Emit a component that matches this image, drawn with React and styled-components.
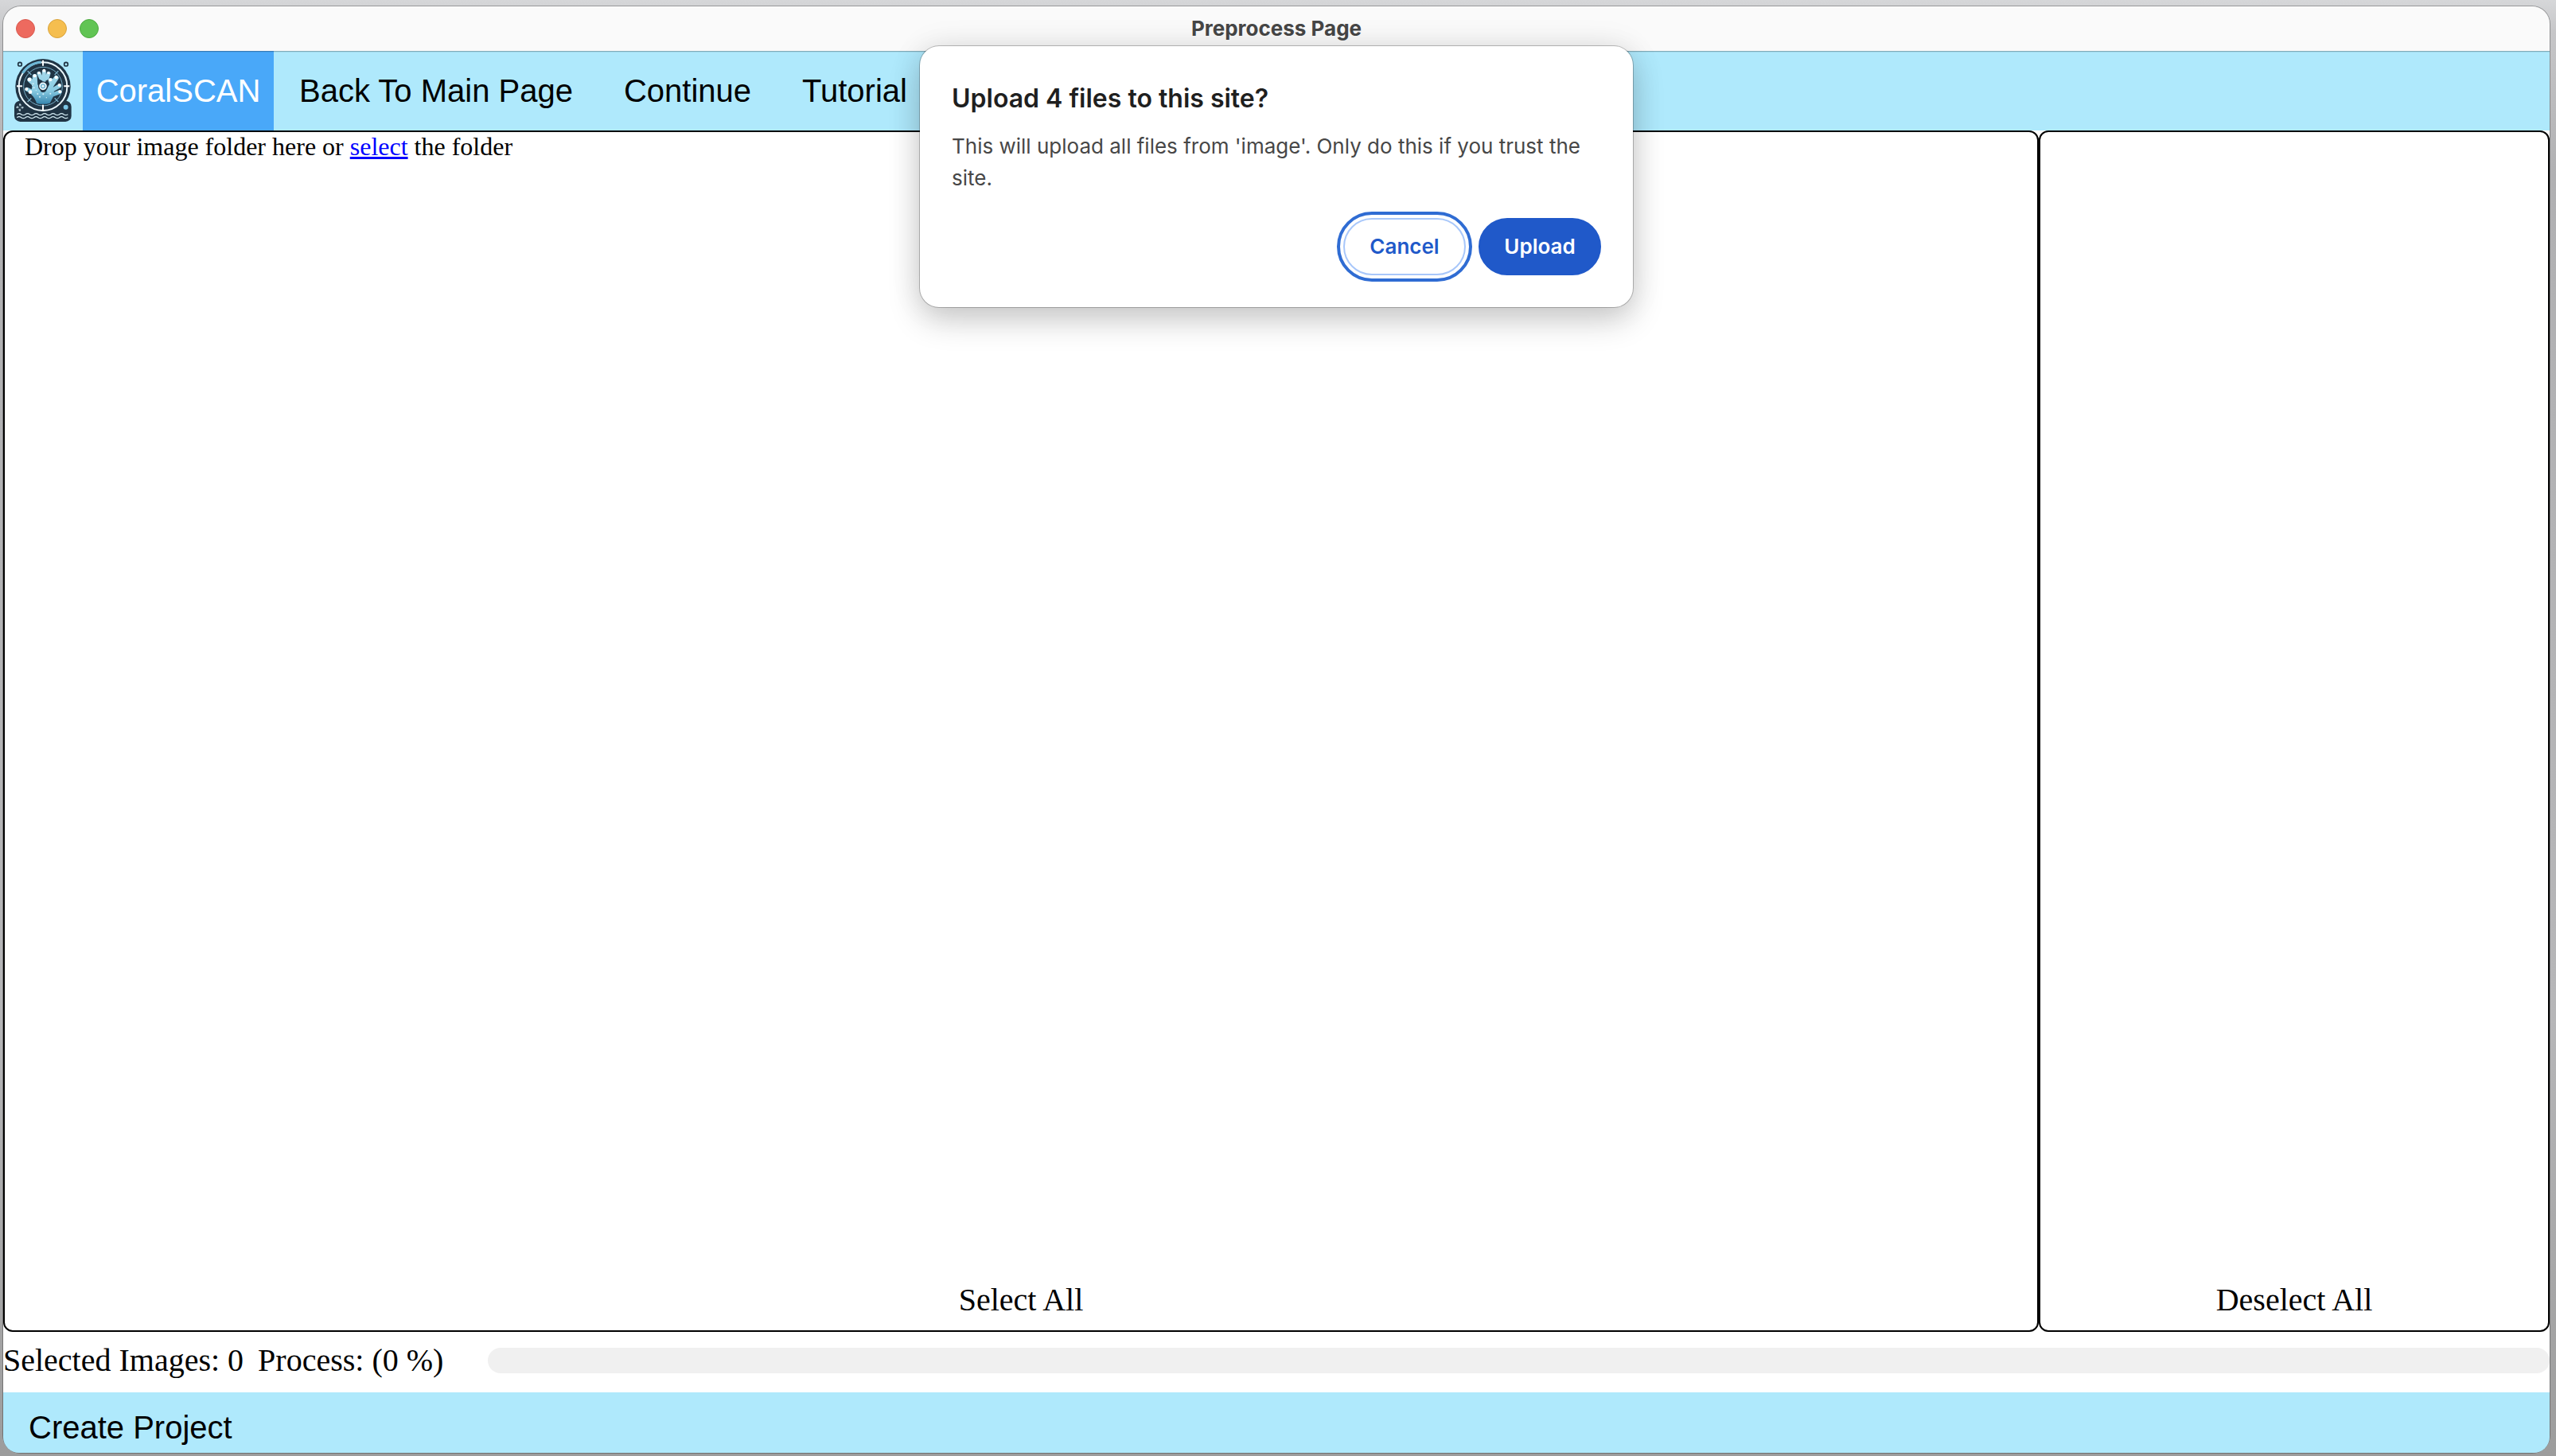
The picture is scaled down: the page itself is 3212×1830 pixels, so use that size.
import React from "react";
import styled, { createGlobalStyle } from "styled-components";

const arial = `"Liberation Sans", Arial, sans-serif`;
const times = `"Liberation Serif", "Times New Roman", serif`;
const system = `Inter, Roboto, sans-serif`;

const GlobalStyle = createGlobalStyle`
  *, *::before, *::after { box-sizing: border-box; }
  body {
    margin: 0;
    font-family: ${times};
    color: #000;
    background: linear-gradient(#d6d7d9 0, #c6c6c8 40px, #b0b0b2 220px, #b6b6b8 70%, #9c9c9c 100%);
  }
`;

const Desktop = styled.div`
  display: flex;
  height: 100vh;
  padding: 8px 8px 4px 4px;
`;

const Window = styled.div`
  position: relative;
  display: flex;
  flex-direction: column;
  flex: 1;
  min-width: 0;
  border-radius: 22px;
  box-shadow: 0 0 0 1px rgba(0, 0, 0, 0.28);
`;

const TitleBar = styled.header`
  position: relative;
  z-index: 1;
  display: grid;
  grid-template-columns: 1fr auto 1fr;
  align-items: center;
  height: 56px;
  padding: 0 16px;
  flex: none;
  background: #fafafa;
  border-radius: 22px 22px 0 0;
  box-shadow: 0 1px 0 rgba(0, 0, 0, 0.22), 0 2px 0 rgba(0, 0, 0, 0.06);
`;

const Lights = styled.div`
  display: flex;
  gap: 16px;
`;

const Light = styled.button`
  width: 24px;
  height: 24px;
  padding: 0;
  border: 1px solid ${(p) => p.$edge};
  border-radius: 50%;
  background: ${(p) => p.$fill};
`;

const WindowTitle = styled.h1`
  margin: 0;
  font: 700 26px/32px ${system};
  color: #464646;
`;

const NavBar = styled.nav`
  display: flex;
  height: 100px;
  flex: none;
  background: #afe9fc;
`;

const LogoLink = styled.a`
  display: block;
  width: 100px;
  height: 100px;
`;

const NavLink = styled.a`
  display: flex;
  align-items: center;
  justify-content: center;
  min-width: ${(p) => (p.$brand ? 240 : 0)}px;
  padding: 0 ${(p) => (p.$brand ? 16 : 32)}px;
  font: 40px/48px ${arial};
  white-space: nowrap;
  text-decoration: none;
  color: ${(p) => (p.$brand ? "#fff" : "#000")};
  background: ${(p) => (p.$brand ? "#49a8f9" : "transparent")};
`;

const Panels = styled.main`
  display: grid;
  grid-template-columns: calc(80% - 2px) 1fr;
  flex: 1;
  min-height: 0;
  background: #fff;
`;

const Panel = styled.section`
  display: flex;
  flex-direction: column;
  justify-content: space-between;
  border: 2px solid #000;
  border-radius: 12px;
`;

const DropHint = styled.p`
  margin: 0;
  padding: 0 25px;
  font-size: 32px;
  line-height: 36px;
`;

const SelectLink = styled.a`
  color: #0000ff;
`;

const PanelAction = styled.button`
  margin-top: auto;
  padding: 0 0 14px;
  border: 0;
  background: none;
  color: #000;
  font: 40px/48px ${times};
`;

const StatusRow = styled.div`
  display: flex;
  align-items: center;
  padding: 12px 0 16px;
  flex: none;
  font-size: 40px;
  line-height: 48px;
  white-space: pre;
  background: #fff;
`;

const StatusText = styled.span`
  margin-right: 18px;
`;

const ProgressLabel = styled.label`
  margin-right: 56px;
`;

const Progress = styled.progress`
  flex: 1;
  min-width: 0;
  height: 32px;
  appearance: none;
  border: 0;
  border-radius: 16px;
  overflow: hidden;
  background: #f0f0f0;

  &::-webkit-progress-bar {
    background: #f0f0f0;
  }
  &::-webkit-progress-value {
    background: #49a8f9;
  }
`;

const Footer = styled.footer`
  display: flex;
  flex: none;
  background: #afe9fc;
  border-radius: 0 0 20px 20px;
`;

const FooterButton = styled.button`
  padding: 20px 32px 8px;
  border: 0;
  background: none;
  color: #000;
  font: 40px/48px ${arial};
`;

const Dialog = styled.section`
  position: absolute;
  z-index: 2;
  top: 50px;
  left: 50%;
  width: 896px;
  transform: translateX(-50%);
  padding: 42px 40px 40px;
  border-radius: 24px;
  background: #fff;
  font-family: ${system};
  box-shadow: 0 0 0 1px rgba(0, 0, 0, 0.24), 0 16px 40px rgba(0, 0, 0, 0.2), 0 0 40px rgba(0, 0, 0, 0.08);
`;

const DialogTitle = styled.h2`
  margin: 0;
  font-size: 32px;
  font-weight: 600;
  line-height: 48px;
  color: #1f1f1f;
`;

const DialogText = styled.p`
  margin: 16px 0 30px;
  font-size: 26px;
  line-height: 40px;
  color: #474747;
`;

const DialogActions = styled.div`
  display: flex;
  justify-content: flex-end;
  gap: 16px;
`;

const PillButton = styled.button`
  width: 154px;
  height: 72px;
  padding: 0;
  border: 2px solid ${(p) => (p.$primary ? "#2059c9" : "#a8c7fa")};
  border-radius: 36px;
  background: ${(p) => (p.$primary ? "#2059c9" : "#fff")};
  color: ${(p) => (p.$primary ? "#fff" : "#2059c9")};
  font: 600 26px/32px ${system};
  outline: ${(p) => (p.$focused ? "4px solid #2f6cd3" : "none")};
  outline-offset: 4px;
`;

const dots = [
  [136, 68, 6], [117, 77, 5], [153, 77, 5], [101, 88, 6], [81, 102, 7],
  [182, 94, 6], [160, 103, 6], [194, 123, 6], [70, 138, 6], [84, 149, 7], [196, 148, 6],
];
const specks = [
  [95, 118, 3], [98, 133, 3], [112, 156, 3], [133, 157, 3], [160, 155, 3],
  [120, 167, 3], [92, 124, 2], [145, 170, 2], [106, 142, 2],
];

function CoralLogo() {
  return (
    <svg width="100" height="100" viewBox="-18 -6 300 300" role="img" aria-label="CoralSCAN logo">
      <defs>
        <linearGradient id="coral" gradientUnits="userSpaceOnUse" x1="0" y1="65" x2="0" y2="195">
          <stop offset="0" stopColor="#a9dbed" />
          <stop offset="0.6" stopColor="#8accE3" />
          <stop offset="1" stopColor="#3585ae" />
        </linearGradient>
      </defs>
      <rect x="24" y="182" width="215" height="79" rx="22" fill="#203444" />
      <circle cx="132" cy="128" r="104" fill="#203444" />
      <circle cx="132" cy="128" r="91" fill="none" stroke="#eaf6fb" strokeWidth="6" />
      <path d="M55 78A92 92 0 0 1 125 36" fill="none" stroke="#6db7d6" strokeWidth="9" />
      <circle cx="132" cy="128" r="73" fill="none" stroke="#79afc8" strokeWidth="3" />
      <path d="M74 70l14 14M190 70l-14 14M74 186l14-14M190 186l-14-14" stroke="#79afc8" strokeWidth="4" />
      <g fill="none" stroke="url(#coral)" strokeLinecap="round" strokeLinejoin="round">
        <path d="M136 72V104M117 79L124 95L136 101L148 95L153 79" strokeWidth="15" />
        <path d="M101 90L103 122L116 152M82 103L102 122M182 96L166 120L150 152M161 105L166 120" strokeWidth="18" />
        <path d="M72 139L100 153L128 170M194 126L170 140L146 166M195 149L166 160" strokeWidth="15" />
      </g>
      <path d="M94 112L114 138Q122 150 132 150Q144 150 152 136L176 132L170 168Q164 180 158 191Q132 198 108 191Q102 172 86 156Z" fill="url(#coral)" />
      <g fill="#fff">
        {dots.map(([x, y, r]) => <circle key={`${x}-${y}`} cx={x} cy={y} r={r} />)}
      </g>
      <g fill="#d5eff7">
        {specks.map(([x, y, r]) => <circle key={`${x}-${y}`} cx={x} cy={y} r={r} />)}
      </g>
      <circle cx="132" cy="127" r="18" fill="#203444" />
      <circle cx="132" cy="127" r="12" fill="#7dbcd6" stroke="#eef9fd" strokeWidth="5" />
      <circle cx="132" cy="127" r="4" fill="#fff" />
      <path d="M132 29V50M132 197V218M33 127H54M211 127H232" stroke="#fff" strokeWidth="6" />
      <g fill="none" stroke="#203444" strokeWidth="5">
        <circle cx="45" cy="44" r="7" />
        <circle cx="219" cy="44" r="7" />
      </g>
      <g fill="none" stroke="#d4ebf3" strokeWidth="3">
        <circle cx="45" cy="207" r="10" strokeDasharray="9 6.7" strokeDashoffset="4" />
        <path d="M45 192V202M45 212V222M31 207H41M49 207H59" />
      </g>
      <circle cx="218" cy="206" r="9" fill="#7cc6e6" />
      <path
        d="M34 233q8-6 16 0t16 0t16 0t16 0t16 0t16 0t16 0t16 0t16 0t16 0t16 0t16 0M34 245q8-6 16 0t16 0t16 0t16 0t16 0t16 0t16 0t16 0t16 0t16 0t16 0t16 0"
        fill="none"
        stroke="#d4ebf3"
        strokeWidth="4"
      />
    </svg>
  );
}

export default function App() {
  return (
    <>
      <GlobalStyle />
      <Desktop>
        <Window>
          <TitleBar>
            <Lights>
              <Light aria-label="Close" $fill="#ed6a5f" $edge="#d9594f" />
              <Light aria-label="Minimize" $fill="#f5be4f" $edge="#d9a33c" />
              <Light aria-label="Zoom" $fill="#61c454" $edge="#4dab40" />
            </Lights>
            <WindowTitle>Preprocess Page</WindowTitle>
          </TitleBar>

          <NavBar>
            <LogoLink href="#home"><CoralLogo /></LogoLink>
            <NavLink href="#home" $brand>CoralSCAN</NavLink>
            <NavLink href="#main">Back To Main Page</NavLink>
            <NavLink href="#continue">Continue</NavLink>
            <NavLink href="#tutorial">Tutorial</NavLink>
          </NavBar>

          <Panels>
            <Panel>
              <DropHint>
                Drop your image folder here or <SelectLink href="#select">select</SelectLink> the folder
              </DropHint>
              <PanelAction>Select All</PanelAction>
            </Panel>
            <Panel>
              <PanelAction>Deselect All</PanelAction>
            </Panel>
          </Panels>

          <StatusRow>
            <StatusText>Selected Images: 0</StatusText>
            <ProgressLabel htmlFor="process">Process: (0 %)</ProgressLabel>
            <Progress id="process" value={0} max={100} />
          </StatusRow>

          <Footer>
            <FooterButton>Create Project</FooterButton>
          </Footer>

          <Dialog role="dialog" aria-labelledby="upload-title">
            <DialogTitle id="upload-title">Upload 4 files to this site?</DialogTitle>
            <DialogText>
              This will upload all files from 'image'. Only do this if you trust the site.
            </DialogText>
            <DialogActions>
              <PillButton $focused>Cancel</PillButton>
              <PillButton $primary>Upload</PillButton>
            </DialogActions>
          </Dialog>
        </Window>
      </Desktop>
    </>
  );
}
